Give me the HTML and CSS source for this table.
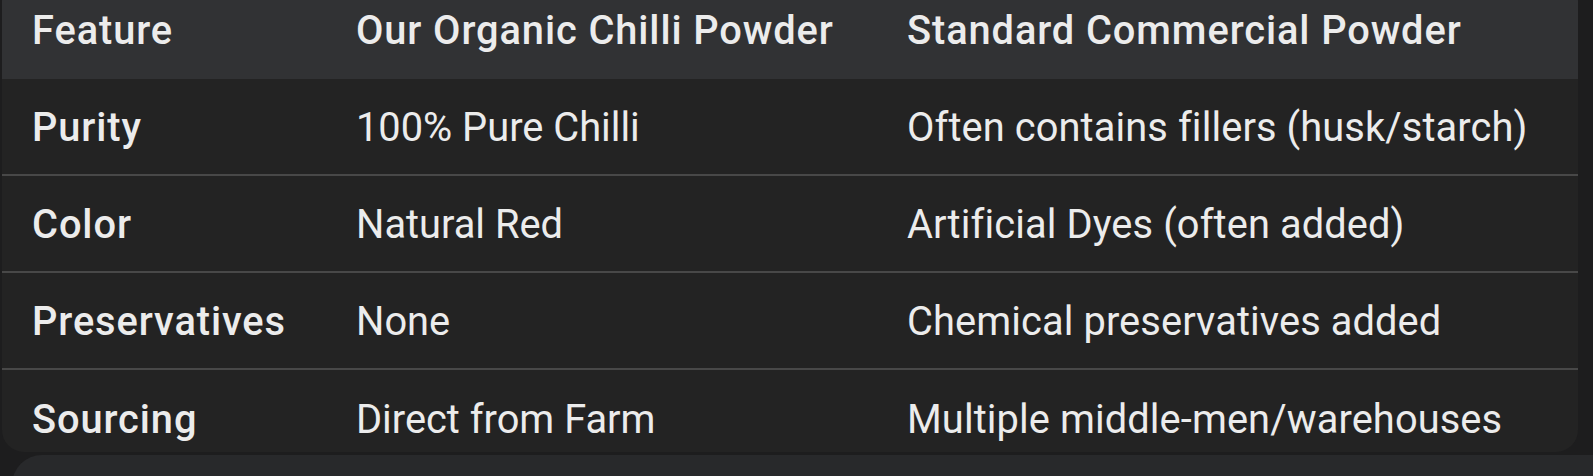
FILE: index.html
```html
<!DOCTYPE html>
<html lang="en">
<head>
<meta charset="utf-8">
<title>Chilli Powder Comparison</title>
<link rel="stylesheet" href="styles.css">
</head>
<body>
<div class="page">
  <div class="card">
    <div class="row head">
      <div class="cell c1">Feature</div>
      <div class="cell c2">Our Organic Chilli Powder</div>
      <div class="cell c3">Standard Commercial Powder</div>
    </div>
    <div class="row">
      <div class="cell c1">Purity</div>
      <div class="cell c2">100% Pure Chilli</div>
      <div class="cell c3">Often contains fillers (husk/starch)</div>
    </div>
    <div class="row">
      <div class="cell c1">Color</div>
      <div class="cell c2">Natural Red</div>
      <div class="cell c3">Artificial Dyes (often added)</div>
    </div>
    <div class="row">
      <div class="cell c1">Preservatives</div>
      <div class="cell c2">None</div>
      <div class="cell c3">Chemical preservatives added</div>
    </div>
    <div class="row last">
      <div class="cell c1">Sourcing</div>
      <div class="cell c2">Direct from Farm</div>
      <div class="cell c3">Multiple middle-men/warehouses</div>
    </div>
  </div>
  <div class="bottom-bar"></div>
</div>
</body>
</html>
```

FILE: styles.css
```css
* { box-sizing: border-box; }
html, body {
  margin: 0;
  height: 100%;
  overflow: hidden;
  background: #1d1d1e;
}
.page {
  display: flex;
  flex-direction: column;
  font-family: Roboto, "Open Sans", sans-serif;
  color: #ececec;
}
.card {
  margin-top: -20px;
  margin-left: 2px;
  width: 1576px;
  height: 472px;
  border-radius: 22px;
  overflow: hidden;
  background: #232323;
  flex: none;
}
.row {
  display: grid;
  grid-template-columns: 324px 551px 1fr;
  height: 97px;
  padding-top: 2px;
  align-items: center;
  border-bottom: 2px solid #484848;
  font-size: 39.8px;
}
.row.head {
  height: 99px;
  padding-top: 1px;
  background: #313234;
  border-bottom: none;
}
.row.last { border-bottom: none; }
.cell {
  padding-left: 30px;
  white-space: nowrap;
}
.c3 { letter-spacing: 0.1px; }
.head .cell,
.c1 {
  font-weight: 500;
  letter-spacing: 0.9px;
}
.bottom-bar {
  margin-top: 3px;
  margin-left: 12px;
  height: 60px;
  background: #28292b;
  border-top-left-radius: 30px;
}
```
